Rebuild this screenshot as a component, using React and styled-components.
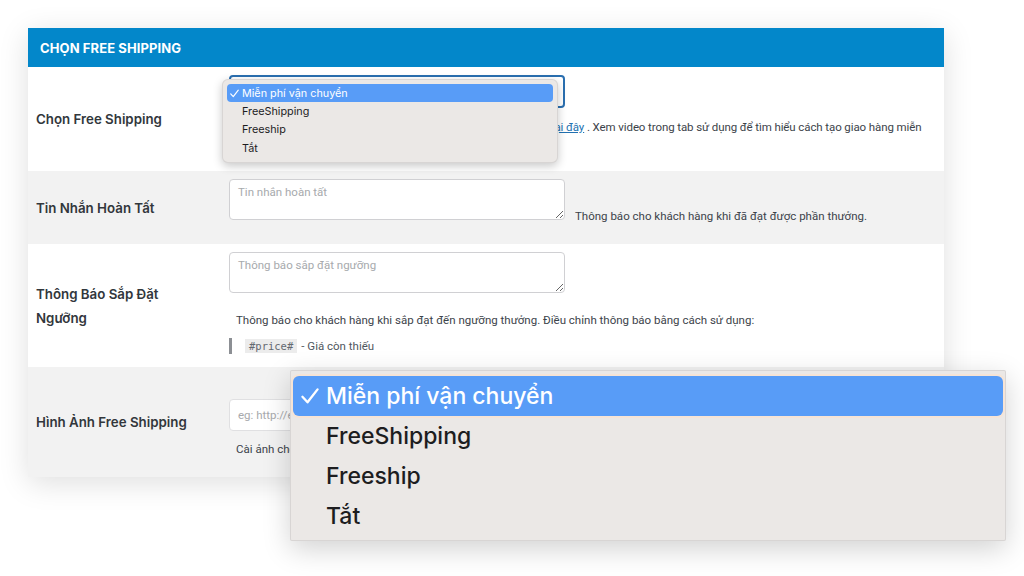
import React from 'react';
import styled, { createGlobalStyle } from 'styled-components';

const GlobalStyle = createGlobalStyle`
  html, body {
    margin: 0;
    padding: 0;
    background: #fff;
  }
  body {
    font-family: Inter, "Noto Sans", sans-serif;
    color: #3c434a;
  }
`;

const OPTIONS = ['Miễn phí vận chuyển', 'FreeShipping', 'Freeship', 'Tắt'];

const Check = ({ size }) => (
  <svg width={size} height={size} viewBox="0 0 16 16" fill="none">
    <path
      d="M2.5 8.6 L6.2 12.6 L13.5 3.2"
      stroke="currentColor"
      strokeWidth="1.7"
      strokeLinecap="round"
      strokeLinejoin="round"
    />
  </svg>
);

const OptionList = ({ big }) => (
  <Popup big={big}>
    {OPTIONS.map((label, i) => (
      <Option key={label} big={big} selected={i === 0}>
        <Tick big={big}>{i === 0 && <Check size={big ? 22 : 11} />}</Tick>
        {label}
      </Option>
    ))}
  </Popup>
);

export default function App() {
  return (
    <Page>
      <GlobalStyle />
      <Card>
        <Header>CHỌN FREE SHIPPING</Header>

        <Row>
          <Label>Chọn Free Shipping</Label>
          <Field pad="8px 18px 17px 0">
            <SelectWrap>
              <Select />
              <OptionList />
            </SelectWrap>
            <Description top="10px">
              <Line>
                Cài đặt giao hàng miễn phí cho mọi đơn hàng của cửa hàng bạn{' '}
                <Link>tại đây</Link> . Xem video trong tab sử dụng để tìm hiểu cách tạo giao hàng miễn
              </Line>
              <Line>phí.</Line>
            </Description>
          </Field>
        </Row>

        <Row shaded>
          <Label>Tin Nhắn Hoàn Tất</Label>
          <Field pad="8px 18px 24px 0">
            <Inline>
              <TextArea placeholder="Tin nhắn hoàn tất" />
              <InlineNote>Thông báo cho khách hàng khi đã đạt được phần thưởng.</InlineNote>
            </Inline>
          </Field>
        </Row>

        <Row>
          <Label>
            Thông Báo Sắp Đặt
            <br />
            Ngưỡng
          </Label>
          <Field pad="8px 18px 13px 0">
            <TextArea placeholder="Thông báo sắp đặt ngưỡng" />
            <Description top="18px" indent>
              Thông báo cho khách hàng khi sắp đạt đến ngưỡng thưởng. Điều chỉnh thông báo bằng cách sử dụng:
            </Description>
            <Quote>
              <Code>#price#</Code> - Giá còn thiếu
            </Quote>
          </Field>
        </Row>

        <Row shaded>
          <Label>Hình Ảnh Free Shipping</Label>
          <Field pad="32px 18px 19px 0">
            <Input placeholder="eg: http://example.com/free-shipping.png" />
            <Description top="9px" indent>
              Cài ảnh cho thông báo giao hàng miễn phí.
            </Description>
          </Field>
        </Row>
      </Card>

      <Magnifier>
        <OptionList big />
      </Magnifier>
    </Page>
  );
}

const Page = styled.div`
  position: relative;
  width: 1024px;
  height: 576px;
  overflow: hidden;
  padding: 28px 0 0 28px;
  box-sizing: border-box;
`;

const Card = styled.div`
  width: 916px;
  background: #fff;
  box-shadow: 0 6px 28px rgba(0, 0, 0, 0.13);
`;

const Header = styled.div`
  height: 39px;
  display: flex;
  align-items: center;
  padding-left: 12px;
  background: #0387ca;
  color: #fff;
  font-size: 13px;
  font-weight: 700;
  letter-spacing: 0.1px;
`;

const Row = styled.div`
  display: grid;
  grid-template-columns: 201px 1fr;
  background: ${p => (p.shaded ? '#f2f2f2' : '#fff')};
`;

const Label = styled.div`
  display: flex;
  align-items: center;
  padding-left: 8px;
  font-size: 13.3px;
  font-weight: 600;
  line-height: 24px;
  color: #32373c;
`;

const Field = styled.div`
  padding: ${p => p.pad};
  display: flex;
  flex-direction: column;
  align-items: flex-start;
  min-width: 0;
`;

const SelectWrap = styled.div`
  position: relative;
`;

const Select = styled.div`
  width: 336px;
  height: 33px;
  box-sizing: border-box;
  border: 2px solid #2a6fb0;
  border-radius: 4px;
  background: #fff;
`;

const Popup = styled.div`
  position: absolute;
  left: ${p => (p.big ? 0 : '-7px')};
  top: ${p => (p.big ? 0 : '4px')};
  width: ${p => (p.big ? '716px' : '336px')};
  box-sizing: border-box;
  padding: ${p => (p.big ? '5px 2px 4px' : '4px')};
  background: #ebe8e6;
  border-radius: ${p => (p.big ? '2px' : '6px')};
  border: 1px solid rgba(0, 0, 0, 0.08);
  box-shadow: ${p =>
    p.big ? '0 8px 28px rgba(0, 0, 0, 0.18)' : '0 3px 10px rgba(0, 0, 0, 0.22)'};
  z-index: 2;
`;

const Option = styled.div`
  display: flex;
  align-items: center;
  height: ${p => (p.big ? '40px' : '18.4px')};
  border-radius: ${p => (p.big ? '6px' : '4px')};
  font-size: ${p => (p.big ? '23px' : '10.8px')};
  font-weight: ${p => (p.big ? 500 : 400)};
  color: ${p => (p.selected ? '#fff' : '#1d1d1f')};
  background: ${p => (p.selected ? '#589cf7' : 'transparent')};
  box-shadow: ${p => (p.selected && p.big ? '0 0 0 2px #f6e4d6' : 'none')};
  white-space: nowrap;
`;

const Tick = styled.span`
  display: inline-flex;
  align-items: center;
  justify-content: center;
  width: ${p => (p.big ? '33px' : '15px')};
`;

const Description = styled.div`
  margin: ${p => p.top} 0 0;
  padding-left: ${p => (p.indent ? '7px' : '0')};
  font-family: Roboto, "Liberation Sans", sans-serif;
  font-size: 11.5px;
  line-height: 18px;
  color: #3c434a;
`;

const Line = styled.div`
  white-space: nowrap;
  letter-spacing: -0.1px;
`;

const Link = styled.a`
  color: #2271b1;
  text-decoration: underline;
`;

const Inline = styled.div`
  display: flex;
  align-items: flex-end;
  gap: 10px;
`;

const InlineNote = styled.span`
  font-family: Roboto, "Liberation Sans", sans-serif;
  font-size: 11.5px;
  line-height: 18px;
  margin-bottom: -5px;
  color: #3c434a;
`;

const TextArea = styled.textarea`
  width: 336px;
  height: 41px;
  box-sizing: border-box;
  padding: 4px 8px;
  border: 1px solid #d0d0d3;
  border-radius: 4px;
  background: #fff;
  font-family: Roboto, "Liberation Sans", sans-serif;
  font-size: 11.5px;
  line-height: 16px;
  color: #2c3338;
  resize: vertical;

  &::placeholder {
    color: #a7aaad;
  }
`;

const Input = styled.input`
  width: 336px;
  height: 32px;
  box-sizing: border-box;
  padding: 0 8px;
  border: 1px solid #e0e0e2;
  border-radius: 4px;
  background: #fff;
  font-family: Roboto, "Liberation Sans", sans-serif;
  font-size: 11.5px;

  &::placeholder {
    color: #a7aaad;
  }
`;

const Quote = styled.div`
  margin-top: 9px;
  display: flex;
  align-items: center;
  gap: 4px;
  height: 16px;
  padding-left: 13px;
  border-left: 3px solid #8c8f94;
  font-family: Roboto, "Liberation Sans", sans-serif;
  font-size: 11.5px;
  color: #50575e;
`;

const Code = styled.code`
  padding: 1px 4px;
  background: #ececec;
  font-family: "DejaVu Sans Mono", "Liberation Mono", monospace;
  font-size: 10.5px;
  color: #646970;
`;

const Magnifier = styled.div`
  position: absolute;
  left: 290px;
  top: 370px;
  z-index: 3;
`;
